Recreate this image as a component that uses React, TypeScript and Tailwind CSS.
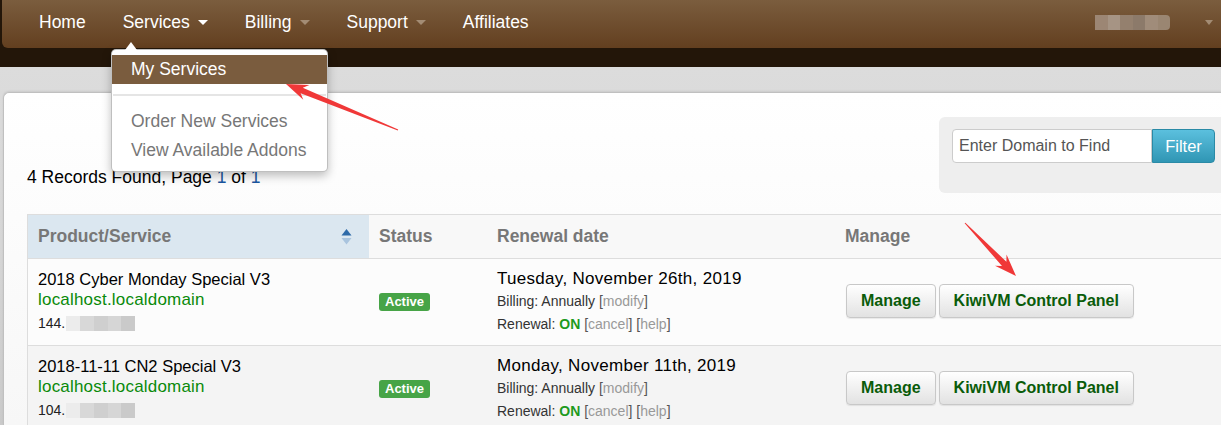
import React from "react";

const Caret = ({ color }: { color: string }) => (
  <span
    className="inline-block w-0 h-0 border-x-[5px] border-x-transparent border-t-[5px] ml-[8px] align-middle"
    style={{ borderTopColor: color }}
  />
);

const Blur = ({ w }: { w: number }) => (
  <span className="inline-flex align-middle h-[15px] blur-[0.6px] ml-[1px]" style={{ width: w }}>
    <span className="flex-1 bg-[#ececec]" />
    <span className="flex-1 bg-[#d8d8d8]" />
    <span className="flex-1 bg-[#cfcfcf]" />
    <span className="flex-1 bg-[#d6d6d6]" />
    <span className="flex-1 bg-[#cacaca]" />
  </span>
);

const Btn = ({ children }: { children: React.ReactNode }) => (
  <button className="h-[34px] px-[14px] rounded-[4px] border border-[#c8c8c8] bg-linear-to-b from-[#ffffff] to-[#e2e2e2] shadow-[0_1px_1px_rgba(0,0,0,0.08)] text-[16px] font-bold text-[#0a5c0a] leading-none">
    {children}
  </button>
);

const Row = ({
  title,
  ip,
  date,
  bg,
}: {
  title: string;
  ip: string;
  date: string;
  bg: string;
}) => (
  <div className={`grid grid-cols-[341px_118px_348px_1fr] h-[87px] border-t border-[#dddddd] ${bg}`}>
    <div className="pl-[10px] pt-[10px]">
      <div className="text-[16.5px] leading-[20px] text-black">{title}</div>
      <div className="text-[17px] leading-[22px] text-[#0a8a0a] tracking-[0.2px]">localhost.localdomain</div>
      <div className="text-[14px] leading-[24px] text-[#222] flex items-center">
        <span>{ip}</span>
        <Blur w={69} />
      </div>
    </div>
    <div className="pl-[10px] flex items-center">
      <span className="h-[18px] px-[6px] rounded-[3px] bg-[#47a447] text-white text-[13px] font-bold leading-[18px]">
        Active
      </span>
    </div>
    <div className="pl-[10px] pt-[10px]">
      <div className="text-[17px] leading-[20px] text-black tracking-[0.3px]">{date}</div>
      <div className="mt-[1px] text-[14px] leading-[23px] text-[#333]">
        Billing: Annually <span className="text-[#555]">[</span>
        <span className="text-[#999]">modify</span>
        <span className="text-[#555]">]</span>
      </div>
      <div className="text-[14px] leading-[23px] text-[#333]">
        Renewal: <span className="font-bold text-[#1e9a1e]">ON</span>{" "}
        <span className="text-[#555]">[</span>
        <span className="text-[#999]">cancel</span>
        <span className="text-[#555]">]</span> <span className="text-[#555]">[</span>
        <span className="text-[#999]">help</span>
        <span className="text-[#555]">]</span>
      </div>
    </div>
    <div className="pl-[11px] flex items-center gap-[3px] pb-[2px]">
      <Btn>Manage</Btn>
      <Btn>KiwiVM Control Panel</Btn>
    </div>
  </div>
);

export default function App() {
  return (
    <div className="relative w-[1221px] h-[425px] overflow-hidden bg-[#231609] font-['Liberation_Sans',Arial,sans-serif]">
      {/* Top nav */}
      <div className="h-[48px] ml-[2px] rounded-bl-[6px] bg-linear-to-b from-[#7b5d3e] to-[#633f1f] flex items-center pl-[37px] pr-[8px] pb-[3px] text-white text-[17.5px]">
        <div className="flex items-center gap-[37px]">
          <span>Home</span>
          <span className="flex items-center">
            Services
            <Caret color="#ffffff" />
          </span>
          <span className="flex items-center">
            Billing
            <Caret color="#a38c74" />
          </span>
          <span className="flex items-center">
            Support
            <Caret color="#a38c74" />
          </span>
          <span>Affiliates</span>
        </div>
        <div className="ml-auto flex items-center">
          <span className="flex h-[15px] w-[75px] blur-[0.6px] mb-[1px]">
            <span className="flex-1 bg-[#9c8674]" />
            <span className="flex-1 bg-[#a69484]" />
            <span className="flex-1 bg-[#94806e]" />
            <span className="flex-1 bg-[#8c7a6a]" />
            <span className="flex-1 bg-[#a08c7a]" />
            <span className="flex-1 bg-[#9a8672] rounded-r-[4px]" />
          </span>
          <span className="inline-block w-0 h-0 border-x-[4px] border-x-transparent border-t-[5px] border-t-[#a38c74] ml-[35px]" />
        </div>
      </div>
      <div className="h-[19px]" />
      {/* Gray area + panel */}
      <div className="h-[358px] pt-[25px] pl-[3px] bg-linear-to-b from-[#dcdcdc] via-[#d6d6d6] to-[#cacaca]">
        <div className="h-full rounded-tl-[6px] border-t border-l border-[#c0c0c0] bg-linear-to-b from-[#ffffff] to-[#f7f7f7] pl-[23px] pt-[24px] shadow-[0_-1px_2px_rgba(0,0,0,0.08)]">
          <div className="w-[1200px]">
            <div className="flex justify-between items-end">
              <div className="pb-[6px] text-[17.5px] leading-[20px] text-black">
                4 Records Found, Page <span className="text-[#1a56a0]">1</span> of{" "}
                <span className="text-[#1a56a0]">1</span>
              </div>
              <div className="w-[288px] h-[76px] rounded-[6px] bg-[#eeeeee] pl-[13px] pt-[12px] flex items-start">
                <div className="w-[200px] h-[34px] bg-white border border-[#cccccc] rounded-l-[4px] pl-[6px] flex items-center text-[16px] text-[#555]">
                  Enter Domain to Find
                </div>
                <div className="w-[63px] h-[34px] rounded-r-[4px] border border-[#2a8aa6] bg-linear-to-b from-[#5bc0de] to-[#2f96b4] text-white text-[16.5px] flex items-center justify-center">
                  Filter
                </div>
              </div>
            </div>
            {/* Table */}
            <div className="mt-[21px] border-t border-l border-[#dddddd]">
              <div className="grid grid-cols-[341px_118px_348px_1fr] h-[43px] bg-[#f8f8f8] text-[17.5px] font-bold text-[#777]">
                <div className="bg-[#dbe7f0] pl-[10px] pr-[17px] flex items-center justify-between">
                  <span>Product/Service</span>
                  <svg width="11" height="18" viewBox="0 0 11 18">
                    <path d="M5.5 1 L10.5 7.5 L0.5 7.5 Z" fill="#2d6aa8" />
                    <path d="M0.5 10 L10.5 10 L5.5 16.5 Z" fill="#a9c4de" />
                  </svg>
                </div>
                <div className="pl-[10px] flex items-center">Status</div>
                <div className="pl-[10px] flex items-center">Renewal date</div>
                <div className="pl-[10px] flex items-center">Manage</div>
              </div>
              <Row
                title="2018 Cyber Monday Special V3"
                ip="144."
                date="Tuesday, November 26th, 2019"
                bg="bg-[#fcfcfc]"
              />
              <Row
                title="2018-11-11 CN2 Special V3"
                ip="104."
                date="Monday, November 11th, 2019"
                bg="bg-[#f4f4f4]"
              />
            </div>
          </div>
        </div>
      </div>

      {/* Services dropdown */}
      <div className="absolute left-[111px] top-[49px] w-[217px] bg-white border border-[rgba(0,0,0,0.25)] rounded-[5px] shadow-[0_4px_10px_rgba(0,0,0,0.25)] pt-[5px] pb-[6px] text-[17.5px]">
        <span className="absolute -top-[8px] left-[13px] w-0 h-0 border-x-[6.5px] border-x-transparent border-b-[8px] border-b-white" />
        <div className="h-[29px] leading-[29px] bg-[#7a5c3e] text-white pl-[19px]">My Services</div>
        <div className="mt-[10px] mb-[11px] mx-[1px] h-[2px] bg-[#e5e5e5]" />
        <div className="h-[29px] leading-[29px] text-[#777] pl-[19px]">Order New Services</div>
        <div className="h-[29px] leading-[29px] text-[#777] pl-[19px]">View Available Addons</div>
      </div>

      {/* Red annotation arrows */}
      <svg className="absolute inset-0 pointer-events-none" width="1221" height="425" viewBox="0 0 1221 425">
        <polygon
          points="398.2,129.5 302.8,87.7 309.4,85.0 286,84 303.3,99.8 300.6,93.3 397.8,130.5"
          fill="#f03838"
        />
        <polygon
          points="964.64,223.35 1002.0,265.9 995.0,265.7 1016,276 1006.5,254.6 1006.4,261.7 965.36,222.65"
          fill="#f03838"
        />
      </svg>
    </div>
  );
}
